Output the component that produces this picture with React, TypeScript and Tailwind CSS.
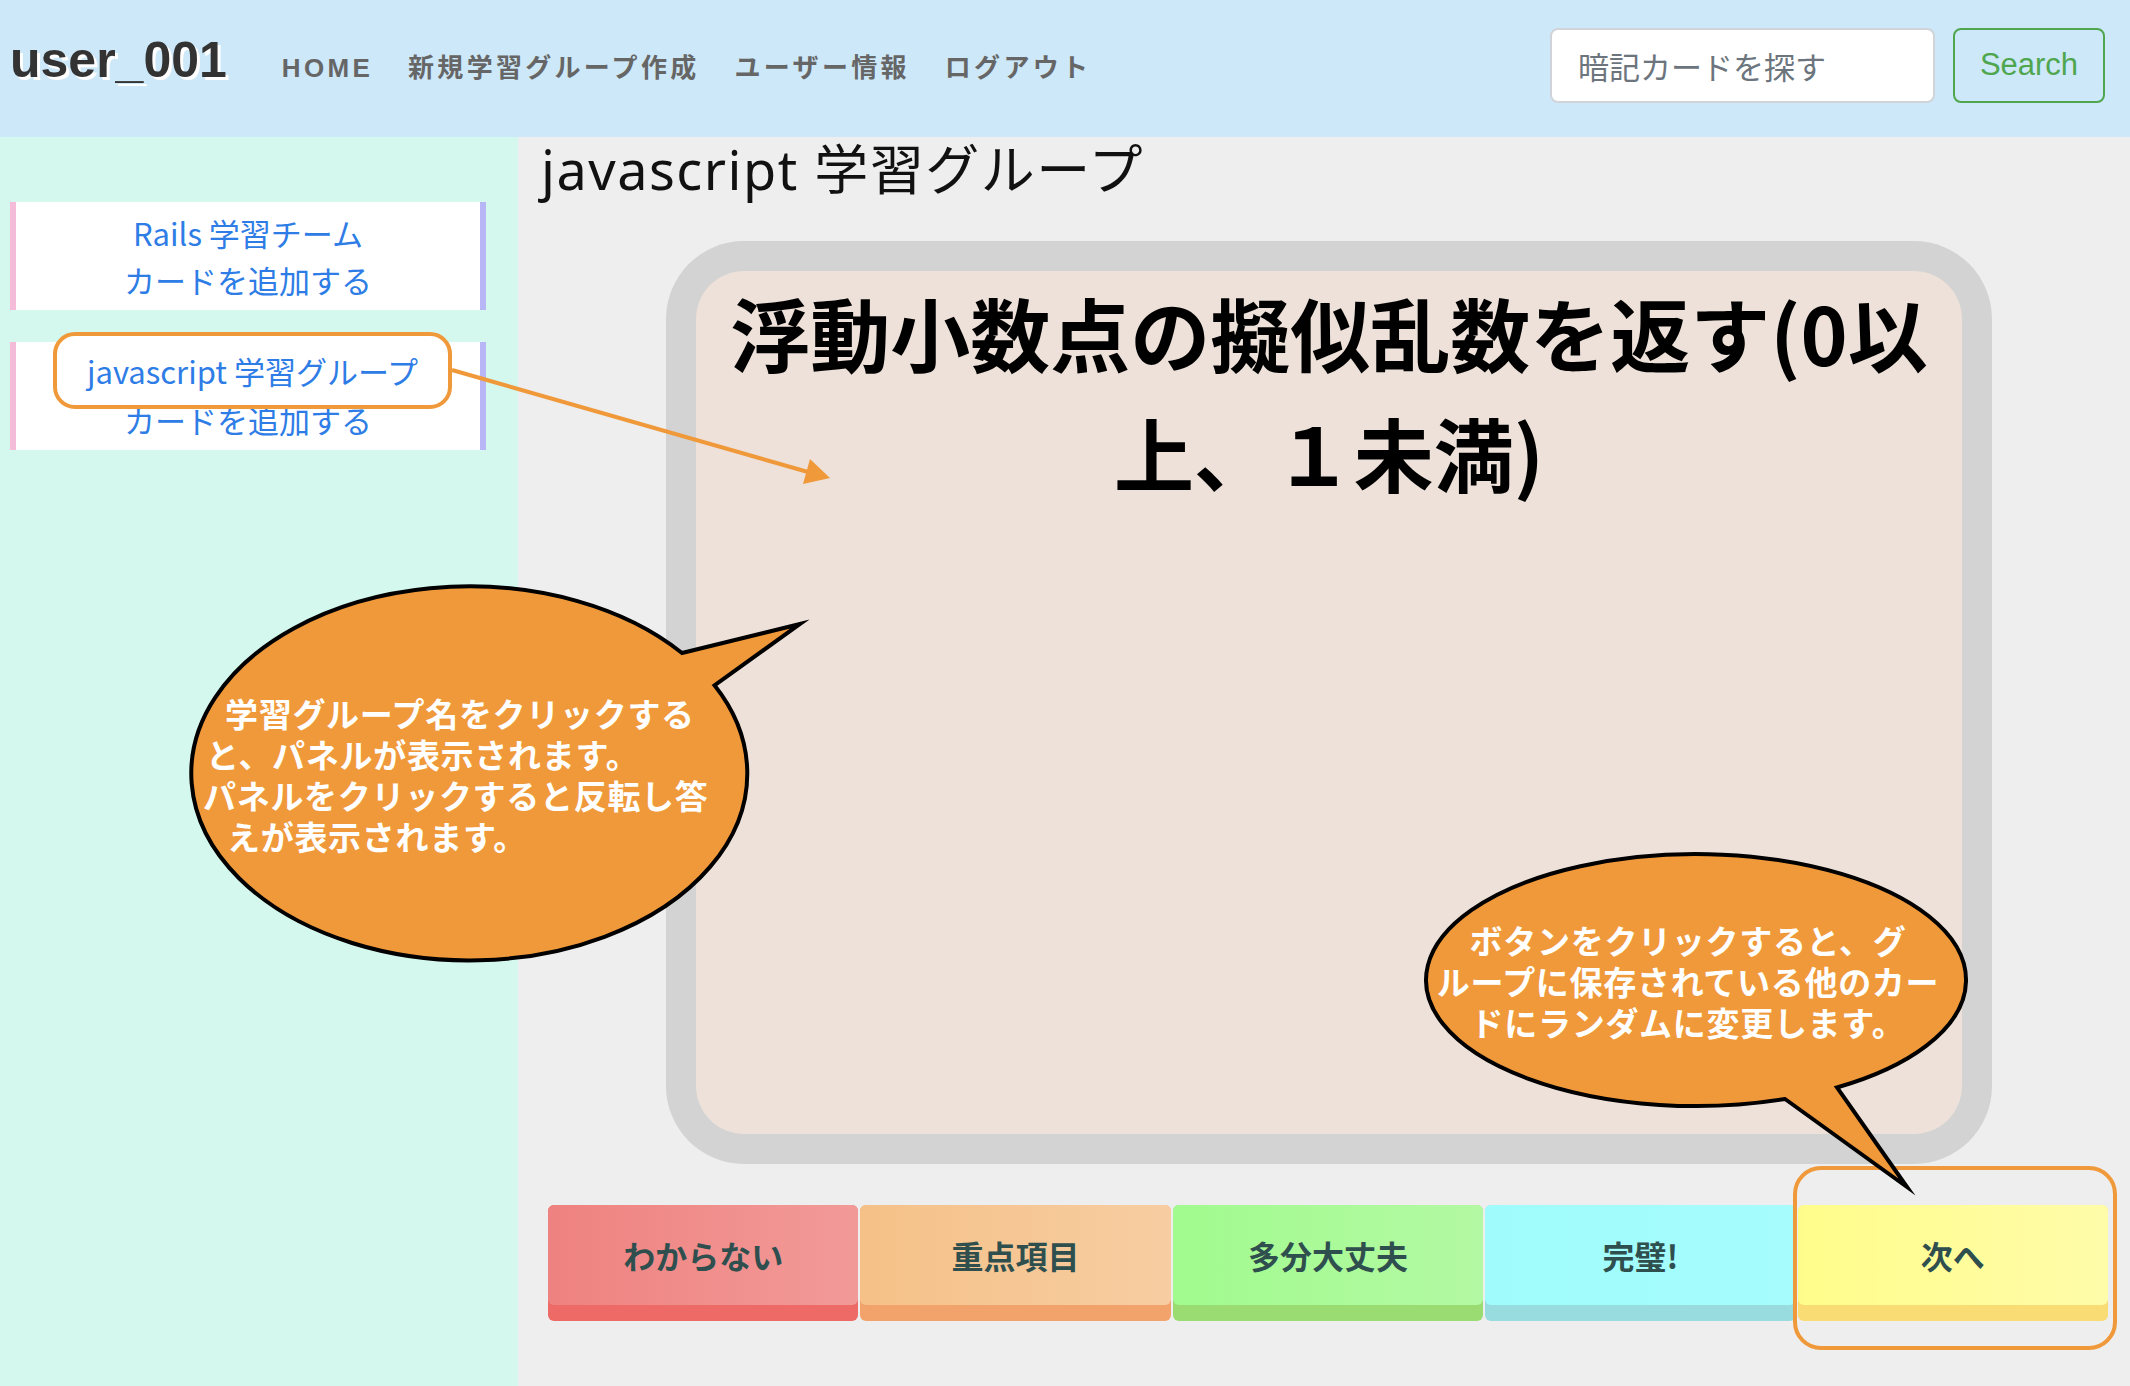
import React from "react";

const buttons = [
  { label: "わからない", from: "from-[#ee8280]", to: "to-[#f29a98]", bottom: "bg-[#ee6a66]" },
  { label: "重点項目", from: "from-[#f5c188]", to: "to-[#f7cda1]", bottom: "bg-[#f2a36c]" },
  { label: "多分大丈夫", from: "from-[#a1fb8e]", to: "to-[#b3f9a3]", bottom: "bg-[#9adb72]" },
  { label: "完璧!", from: "from-[#a0fcfc]", to: "to-[#a6fcfc]", bottom: "bg-[#98dcdf]" },
  { label: "次へ", from: "from-[#fffd8a]", to: "to-[#fffca9]", bottom: "bg-[#fadc74]" },
];

export default function App() {
  return (
    <div className="relative w-[2130px] h-[1386px] overflow-hidden font-['Noto_Sans_CJK_JP',sans-serif]">
      {/* Header */}
      <header className="h-[137px] bg-[#cde8f9] flex items-start justify-between">
        <div className="flex items-baseline mt-[35px] ml-[10px]">
          <span className="text-[50px] leading-none font-bold text-[#333] font-['Liberation_Sans','Noto_Sans_CJK_JP',sans-serif] [text-shadow:3px_3px_0_#fff]">
            user_001
          </span>
          <nav className="flex items-baseline gap-[35px] ml-[55px] text-[26px] font-bold text-[#666] tracking-[3.3px] font-['Liberation_Sans','Noto_Sans_CJK_JP',sans-serif]">
            <span>HOME</span>
            <span>新規学習グループ作成</span>
            <span>ユーザー情報</span>
            <span>ログアウト</span>
          </nav>
        </div>
        <div className="flex mt-[28px] mr-[25px] gap-[18px]">
          <input
            className="h-[75px] w-[385px] rounded-[8px] border-2 border-[#d0d4d8] bg-white pl-[26px] text-[31px] text-[#333] placeholder:text-[#6c757d] outline-none"
            placeholder="暗記カードを探す"
          />
          <button className="h-[75px] w-[152px] rounded-[8px] border-2 border-[#4fa64f] text-[#4fa64f] text-[31px] font-['Liberation_Sans',sans-serif]">
            Search
          </button>
        </div>
      </header>

      <div className="flex h-[1249px]">
        {/* Sidebar */}
        <aside className="w-[518px] bg-[#d4f8ee] pt-[65px] pl-[10px] pr-[32px] flex flex-col gap-[32px]">
          <div className="h-[108px] bg-white border-l-[6px] border-r-[6px] border-l-[#f4bcd9] border-r-[#b9b6f5] flex flex-col items-center justify-center text-[31px] leading-[47px] text-[#2e7de6]">
            <span>Rails 学習チーム</span>
            <span>カードを追加する</span>
          </div>
          <div className="relative h-[108px] bg-white border-l-[6px] border-r-[6px] border-l-[#f4bcd9] border-r-[#b9b6f5] flex flex-col items-center justify-center text-[31px] leading-[47px] text-[#2e7de6]">
            <span className="relative z-0">&nbsp;</span>
            <span className="relative z-0">カードを追加する</span>
            <div className="absolute left-[37px] top-[-10px] w-[399px] h-[77px] z-10 rounded-[22px] border-4 border-[#f0993a] bg-white flex items-center justify-center">
              <span className="leading-[47px]">javascript 学習グループ</span>
            </div>
          </div>
        </aside>

        {/* Main */}
        <main className="flex-1 bg-[#eeeeee]">
          <h1 className="mt-0 ml-[23px] text-[54px] leading-[64px] font-normal tracking-[1.5px] text-[#111] font-['Noto_Sans','Noto_Sans_CJK_JP',sans-serif]">
            javascript 学習グループ
          </h1>
          <div className="mt-[40px] ml-[148px] w-[1326px] h-[923px] rounded-[78px] bg-[#d3d3d3] p-[30px]">
            <div className="h-full rounded-[48px] bg-[#ede1d9] text-center font-bold text-[80px] leading-[120px] text-black">
              浮動小数点の擬似乱数を返す(0以
              <br />
              上、１未満)
            </div>
          </div>
          <div className="mt-[41px] ml-[30px] w-[1560px] grid grid-cols-5 gap-[2px]">
            {buttons.map((b) => (
              <div key={b.label} className={`h-[116px] rounded-[6px] ${b.bottom}`}>
                <div
                  className={`h-[100px] rounded-[6px] bg-linear-to-r ${b.from} ${b.to} flex items-center justify-center text-[32px] font-bold text-[#2f4f4f]`}
                >
                  {b.label}
                </div>
              </div>
            ))}
          </div>
        </main>
      </div>

      {/* Highlight around 次へ */}
      <div className="absolute left-[1793px] top-[1166px] w-[324px] h-[184px] rounded-[28px] border-4 border-[#f0993a]" />

      {/* Arrow and balloons */}
      <svg
        className="absolute left-0 top-0 pointer-events-none"
        width="2130"
        height="1386"
        viewBox="0 0 2130 1386"
      >
        <line x1="452" y1="370" x2="808" y2="472" stroke="#f0993a" strokeWidth="4" />
        <polygon points="830,478 810,459 803,484" fill="#f0993a" />
        <path
          d="M682 653 L800 624 L714.5 685.3 A278 187 0 1 1 682 653 Z"
          fill="#f0993a"
          stroke="#000"
          strokeWidth="4"
          strokeLinejoin="miter"
          strokeMiterlimit="10"
        />
        <path
          d="M1785 1099 L1907 1187 L1837 1087.5 A270 126 0 1 0 1785 1099 Z"
          fill="#f0993a"
          stroke="#000"
          strokeWidth="4"
          strokeLinejoin="miter"
          strokeMiterlimit="10"
        />
      </svg>

      {/* Balloon 1 text */}
      <div className="absolute left-[203px] top-[693px] text-white font-bold text-[33px] leading-[41px] tracking-[0.7px] whitespace-nowrap">
        <div className="pl-[22px]">学習グループ名をクリックする</div>
        <div className="pl-[3px]">と、パネルが表示されます。</div>
        <div>パネルをクリックすると反転し答</div>
        <div className="pl-[24px]">えが表示されます。</div>
      </div>

      {/* Balloon 2 text */}
      <div className="absolute left-[1418px] top-[920px] w-[540px] text-center text-white font-bold text-[33px] leading-[41px] tracking-[0.7px] whitespace-nowrap">
        <div>ボタンをクリックすると、グ</div>
        <div>ループに保存されている他のカー</div>
        <div>ドにランダムに変更します。</div>
      </div>
    </div>
  );
}
